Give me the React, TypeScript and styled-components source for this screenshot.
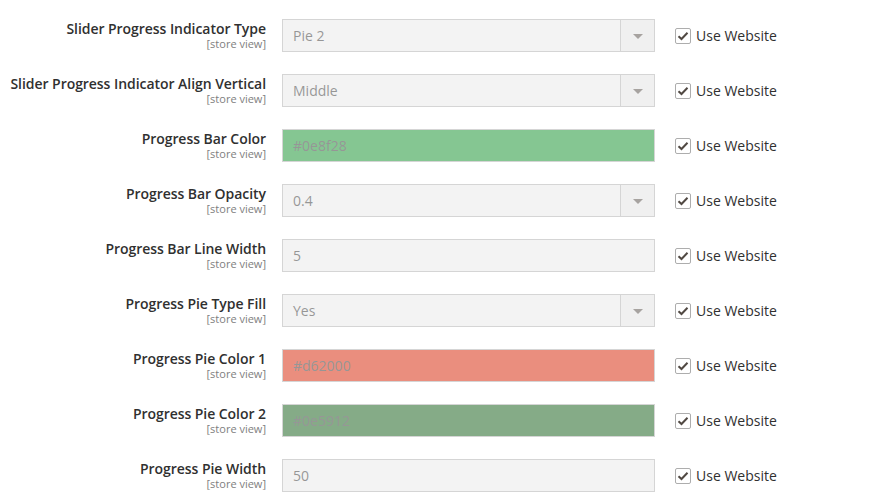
import React from "react";
import styled, { createGlobalStyle } from "styled-components";

const Global = createGlobalStyle`
  html, body { margin: 0; padding: 0; background: #fff; }
  body { font-family: "Open Sans", "Liberation Sans", sans-serif; color: #303030; }
`;

const Form = styled.div`
  display: flex;
  flex-direction: column;
  gap: 22px;
  padding-top: 19px;
`;

const Row = styled.div`
  display: grid;
  grid-template-columns: 266px 373px auto;
  grid-template-rows: 33px;
  column-gap: 16px;
  align-items: start;
`;

const Label = styled.div`
  display: flex;
  flex-direction: column;
  align-items: flex-end;
  text-align: right;
  padding-top: 1px;
`;

const LabelText = styled.span`
  font-size: 14px;
  font-weight: 600;
  line-height: 18px;
  color: #303030;
  white-space: nowrap;
  letter-spacing: -0.05px;
`;

const Scope = styled.span`
  font-size: 11px;
  line-height: 12px;
  color: #808080;
`;

const Control = styled.div<{ $bg?: string }>`
  height: 33px;
  box-sizing: border-box;
  border: 1px solid #adadad;
  background: ${(p) => p.$bg ?? "#e9e9e9"};
  opacity: 0.5;
  display: flex;
  align-items: stretch;
  font-size: 14px;
  color: #303030;
`;

const Value = styled.div`
  flex: 1;
  display: flex;
  align-items: center;
  padding-left: 10px;
  line-height: 20px;
`;

const Arrow = styled.div`
  width: 33px;
  border-left: 1px solid #adadad;
  background: #e3e3e3;
  display: flex;
  align-items: center;
  justify-content: center;
  &::after {
    content: "";
    display: block;
    width: 0;
    height: 0;
    border-left: 5px solid transparent;
    border-right: 5px solid transparent;
    border-top: 5px solid #514943;
    margin-top: 1px;
  }
`;

const Inherit = styled.label`
  display: flex;
  align-items: center;
  gap: 5px;
  height: 33px;
  margin-left: 4px;
  font-size: 14px;
  color: #303030;
`;

const Box = styled.span`
  width: 16px;
  height: 16px;
  box-sizing: border-box;
  border: 1px solid #adadad;
  border-radius: 2px;
  background: #fff;
  display: flex;
  align-items: center;
  justify-content: center;
  margin-top: 1px;
`;

type Field = { label: string; value: string; select?: boolean; color?: string };

const fields: Field[] = [
  { label: "Slider Progress Indicator Type", value: "Pie 2", select: true },
  { label: "Slider Progress Indicator Align Vertical", value: "Middle", select: true },
  { label: "Progress Bar Color", value: "#0e8f28", color: "#0e8f28" },
  { label: "Progress Bar Opacity", value: "0.4", select: true },
  { label: "Progress Bar Line Width", value: "5" },
  { label: "Progress Pie Type Fill", value: "Yes", select: true },
  { label: "Progress Pie Color 1", value: "#d62000", color: "#d62000" },
  { label: "Progress Pie Color 2", value: "#0e5912", color: "#0e5912" },
  { label: "Progress Pie Width", value: "50" },
];

const Check = () => (
  <svg width="12" height="10" viewBox="0 0 12 10">
    <path d="M1.5 5.2 L4.5 8 L10.5 1.8" fill="none" stroke="#514943" strokeWidth="2" />
  </svg>
);

export default function App() {
  return (
    <>
      <Global />
      <Form>
        {fields.map((f) => (
          <Row key={f.label}>
            <Label>
              <LabelText>{f.label}</LabelText>
              <Scope>[store view]</Scope>
            </Label>
            <Control $bg={f.color}>
              <Value>{f.value}</Value>
              {f.select && <Arrow />}
            </Control>
            <Inherit>
              <Box>
                <Check />
              </Box>
              Use Website
            </Inherit>
          </Row>
        ))}
      </Form>
    </>
  );
}
